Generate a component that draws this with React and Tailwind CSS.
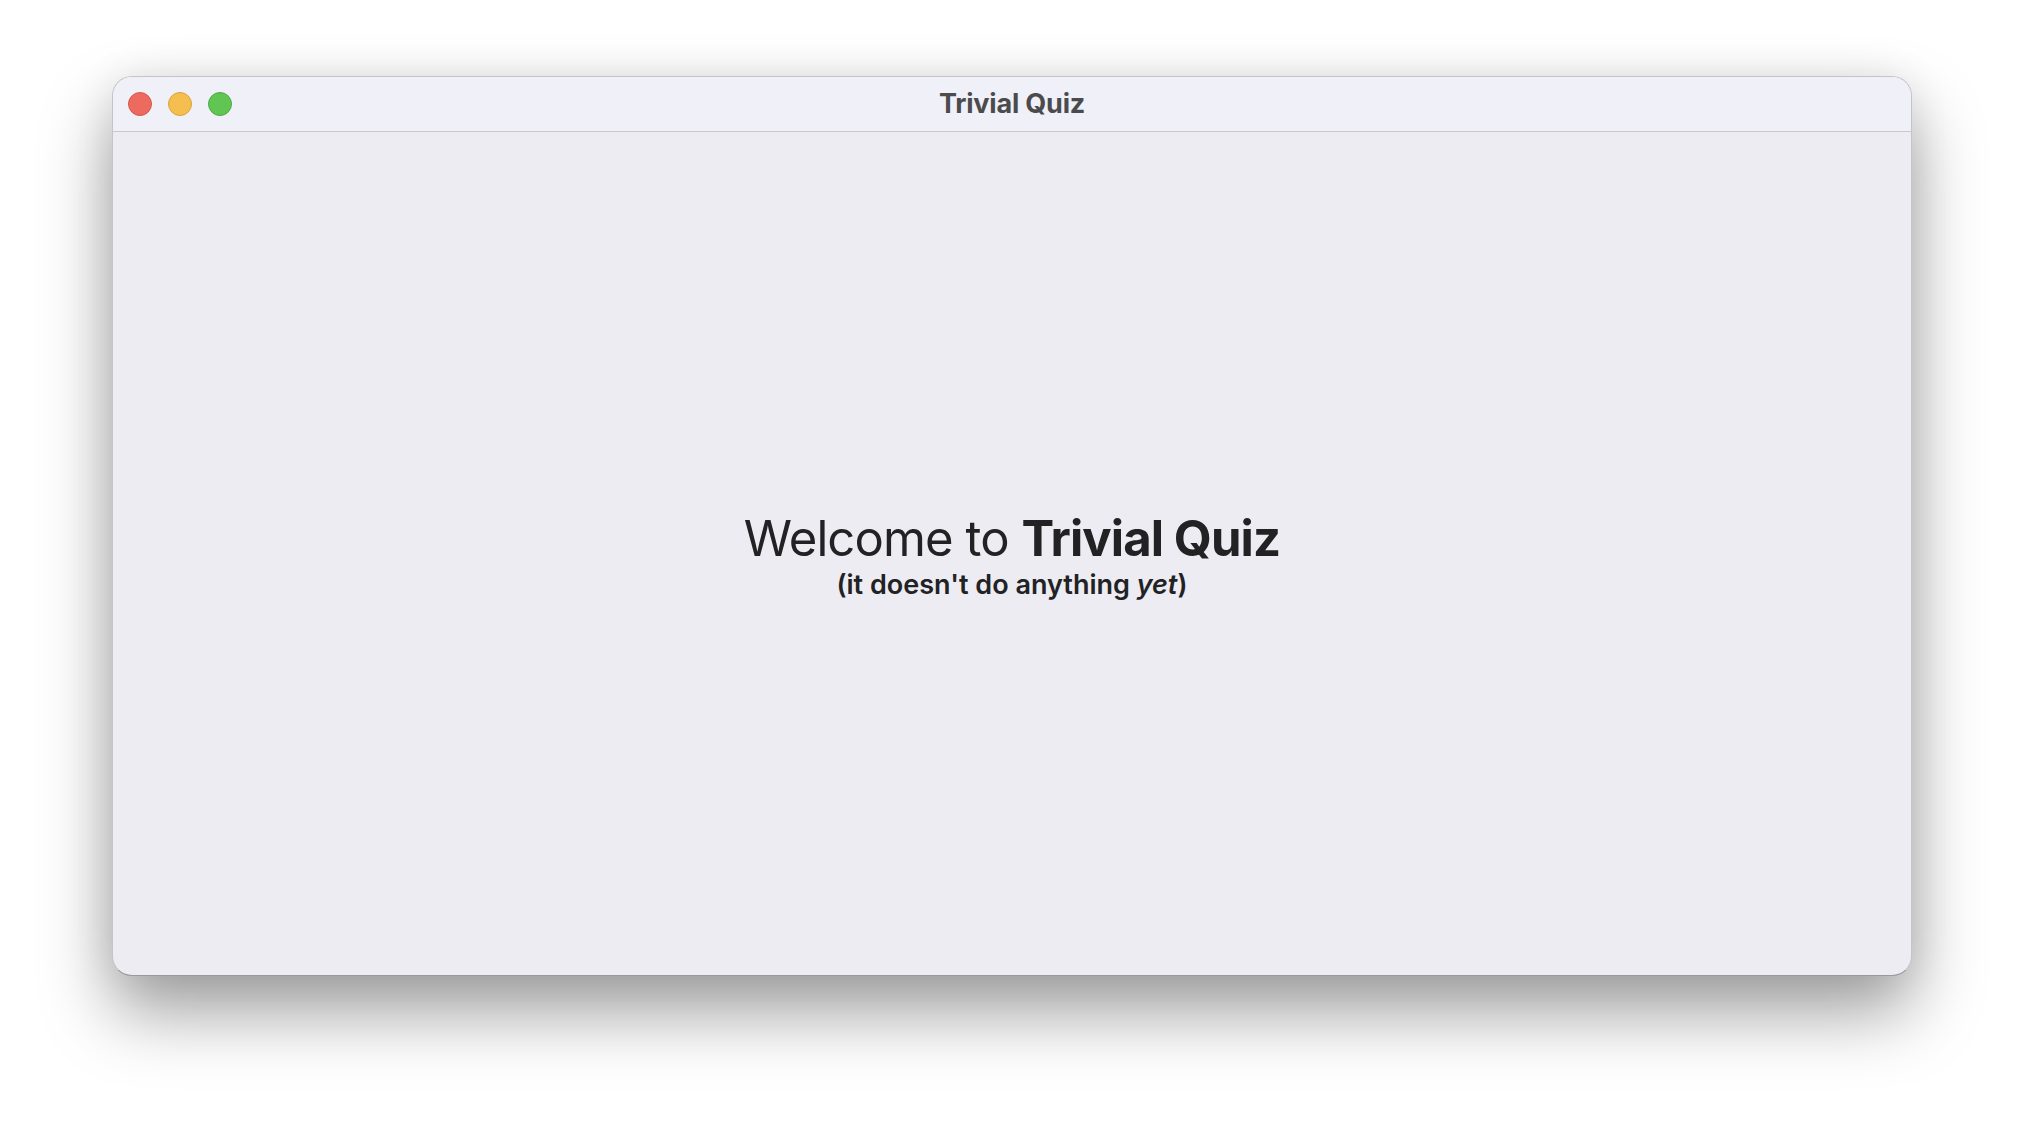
import React from 'react'

const font = { fontFamily: 'Inter, "Noto Sans", sans-serif' }

export default function App() {
  return (
    <div className="w-[2024px] h-[1124px] bg-white pl-[112px] pt-[76px]" style={font}>
      <div className="w-[1800px] h-[900px] flex flex-col rounded-[20px] overflow-hidden border border-[#c4c4c8] border-b-[#9a9a9e] bg-[#ececf2] shadow-[0_36px_70px_rgba(0,0,0,0.38),0_0_40px_rgba(0,0,0,0.08)]">
        {/* title bar */}
        <div className="relative h-[55px] shrink-0 flex items-center justify-center bg-[#f0f0f8] border-b border-[#c8c8cd]">
          <div className="absolute left-[15px] top-[15px] flex gap-4">
            <span className="w-6 h-6 rounded-full bg-[#ed6a5e] border border-[#d5574c]" />
            <span className="w-6 h-6 rounded-full bg-[#f5bf4f] border border-[#d9a23e]" />
            <span className="w-6 h-6 rounded-full bg-[#61c554] border border-[#4fa943]" />
          </div>
          <span className="text-[27px] font-bold text-[#4b4b4d] tracking-[-0.2px]">Trivial Quiz</span>
        </div>

        {/* content */}
        <div className="flex-1 flex flex-col items-center justify-center pt-[2px]">
          <h1 className="text-[49px] leading-[60px] text-[#222224] tracking-[-0.9px]">
            Welcome to <span className="font-bold">Trivial Quiz</span>
          </h1>
          <p className="text-[27px] leading-[32px] font-semibold text-[#222224]">
            (it doesn't do anything <em>yet</em>)
          </p>
        </div>
      </div>
    </div>
  )
}
